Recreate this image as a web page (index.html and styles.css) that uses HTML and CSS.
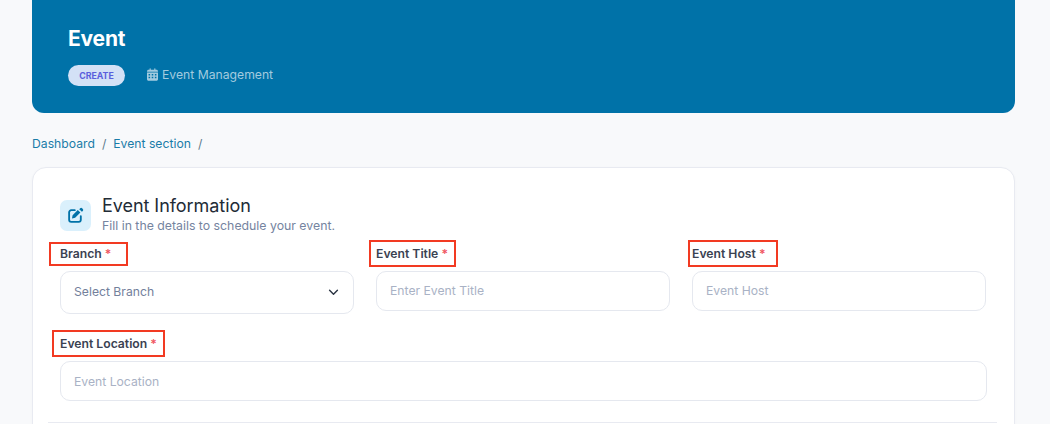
FILE: index.html
```html
<!DOCTYPE html>
<html lang="en">
<head>
<meta charset="utf-8">
<title>Event</title>
<link rel="stylesheet" href="styles.css">
</head>
<body>
<main class="page">
  <header class="hero">
    <h1 class="hero-title">Event</h1>
    <div class="hero-meta">
      <span class="pill">CREATE</span>
      <span class="hero-sub">
        <svg class="cal" viewBox="0 0 448 512" aria-hidden="true"><path fill="currentColor" d="M152 24c0-13-11-24-24-24s-24 11-24 24v40H64C29 64 0 93 0 128v16h448v-16c0-35-29-64-64-64h-40V24c0-13-11-24-24-24s-24 11-24 24v40H152V24zM448 176H0v272c0 35 29 64 64 64h320c35 0 64-29 64-64V176zM64 240h64v56H64v-56zm128 0h64v56h-64v-56zm128 0h64v56h-64v-56zM64 352h64v56H64v-56zm128 0h64v56h-64v-56zm128 0h64v56h-64v-56z"/></svg>
        Event Management
      </span>
    </div>
  </header>

  <nav class="crumbs">
    <a class="crumb">Dashboard</a><span class="sep">/</span><a class="crumb">Event section</a><span class="sep">/</span>
  </nav>

  <section class="card">
    <div class="card-head">
      <span class="head-icon">
        <svg viewBox="0 0 24 24" width="17" height="17" aria-hidden="true"><path fill="none" stroke="currentColor" stroke-width="2.6" stroke-linecap="round" stroke-linejoin="round" d="M11 4.5H6a3 3 0 0 0-3 3V18a3 3 0 0 0 3 3h10.500a3 3 0 0 0 3-3v-5"/><path fill="currentColor" d="M18.600 1.800a2 2 0 0 1 2.800 0l.9.9a2 2 0 0 1 0 2.800l-1.300 1.300-3.700-3.700zM15.200 4.200l3.700 3.700-7.400 7.400-4.500.9.900-4.600z"/></svg>
      </span>
      <div class="head-text">
        <h2 class="card-title">Event Information</h2>
        <p class="card-sub">Fill in the details to schedule your event.</p>
      </div>
    </div>

    <div class="row-three">
      <div class="field">
        <label class="label mark-branch">Branch <span class="req">*</span></label>
        <div class="control select">
          <span class="select-text">Select Branch</span>
          <svg class="chev" viewBox="0 0 12 8" aria-hidden="true"><path fill="none" stroke="currentColor" stroke-width="1.600" stroke-linecap="round" stroke-linejoin="round" d="M1.500 1.500 6 6l4.500-4.500"/></svg>
        </div>
      </div>
      <div class="field">
        <label class="label mark-title">Event Title <span class="req">*</span></label>
        <input class="control" placeholder="Enter Event Title">
      </div>
      <div class="field">
        <label class="label mark-host">Event Host <span class="req">*</span></label>
        <input class="control" placeholder="Event Host">
      </div>
    </div>

    <div class="field field-wide">
      <label class="label mark-location">Event Location <span class="req">*</span></label>
      <input class="control control-wide" placeholder="Event Location">
    </div>

    <hr class="divider">
  </section>
</main>
</body>
</html>
```
FILE: styles.css
```css
* { box-sizing: border-box; }
html, body { margin: 0; height: 424px; overflow: hidden; }
body {
  background: #f8f9fb;
  font-family: "Inter", "Liberation Sans", sans-serif;
  color: #1f2937;
}
.page { height: 424px; overflow: hidden; padding: 0 35px 0 32px; }

.hero {
  height: 113px;
  background: #0072a8;
  border-radius: 0 0 12px 12px;
  padding: 26px 36px 0;
}
.hero-title {
  margin: 0;
  font-size: 21px;
  line-height: 25px;
  font-weight: 700;
  color: #fff;
  letter-spacing: -0.2px;
}
.hero-meta {
  margin-top: 14px;
  display: flex;
  align-items: center;
  gap: 22px;
}
.pill {
  width: 57px;
  height: 21px;
  border-radius: 11px;
  background: #d3e1f6;
  color: #5a5fdc;
  font-size: 8.800px;
  font-weight: 700;
  display: flex;
  align-items: center;
  justify-content: center;
}
.hero-sub {
  display: flex;
  align-items: center;
  gap: 4px;
  color: #a3cbdf;
  font-size: 12.200px;
  line-height: 20px;
  margin-top: -1px;
}
.cal { width: 11px; height: 13px; margin-top: -1px; }

.crumbs {
  margin-top: 21px;
  height: 18px;
  display: flex;
  align-items: center;
  font-size: 12.200px;
  color: #5d7a8c;
}
.crumb { color: #1a7ca8; }
.sep { margin: 0 7px; }

.card {
  margin-top: 15px;
  height: 280px;
  background: #fff;
  border: 1px solid #e8eaf1;
  border-radius: 14px;
  padding: 32px 17px 0 16px;
  box-shadow: 0 1px 3px rgba(30, 40, 70, .03);
}
.card-head {
  display: flex;
  gap: 11px;
  padding-left: 11px;
  height: 45px;
}
.head-icon {
  width: 31px;
  height: 31px;
  border-radius: 7px;
  background: #daf0fc;
  color: #0072a8;
  display: flex;
  align-items: center;
  justify-content: center;
}
.head-text { margin-top: -6px; }
.card-title {
  margin: 0;
  font-size: 18px;
  line-height: 24px;
  font-weight: 400;
  color: #222b36;
  letter-spacing: -0.05px;
}
.card-sub {
  margin: 0;
  font-size: 12.300px;
  line-height: 16px;
  color: #7584a0;
}

.row-three {
  display: grid;
  grid-template-columns: repeat(3, 294px);
  column-gap: 22px;
  padding-left: 11px;
  align-items: start;
}
.field { display: flex; flex-direction: column; }
.field-wide { margin-top: 21px; padding-left: 11px; width: 938px; }
.label {
  position: relative;
  align-self: flex-start;
  font-size: 12.200px;
  font-weight: 600;
  line-height: 18px;
  color: #3a4252;
  margin-bottom: 8px;
}
.req { color: #f0555f; }
.label::after {
  content: "";
  position: absolute;
  border: 2px solid #f23a22;
  pointer-events: none;
}
.mark-branch::after { left: -11px; right: -17px; top: -3px; bottom: -3px; }
.mark-title::after { left: -7px; right: -8px; top: -5px; bottom: -4px; }
.mark-host::after { left: -4px; right: -12px; top: -5px; bottom: -4px; }
.mark-location::after { left: -8px; right: -8px; top: -5px; bottom: -4px; }

.control {
  width: 100%;
  height: 40px;
  border: 1px solid #e5e8ef;
  border-radius: 10px;
  background: #fff;
  padding: 0 13px 2px;
  font: 12.200px "Inter", "Liberation Sans", sans-serif;
  outline: none;
}
.control-wide { padding-bottom: 0; }
.control::placeholder { color: #a9b2c5; opacity: 1; }
.select {
  height: 43px;
  display: flex;
  align-items: center;
  justify-content: space-between;
  padding-right: 14px;
}
.select-text { color: #73809b; }
.chev { width: 11px; height: 7px; color: #2a3342; margin-top: 2px; }

.divider {
  margin: 21px 0 0 -1px;
  border: 0;
  border-top: 1px solid #e8eaf1;
}
```
